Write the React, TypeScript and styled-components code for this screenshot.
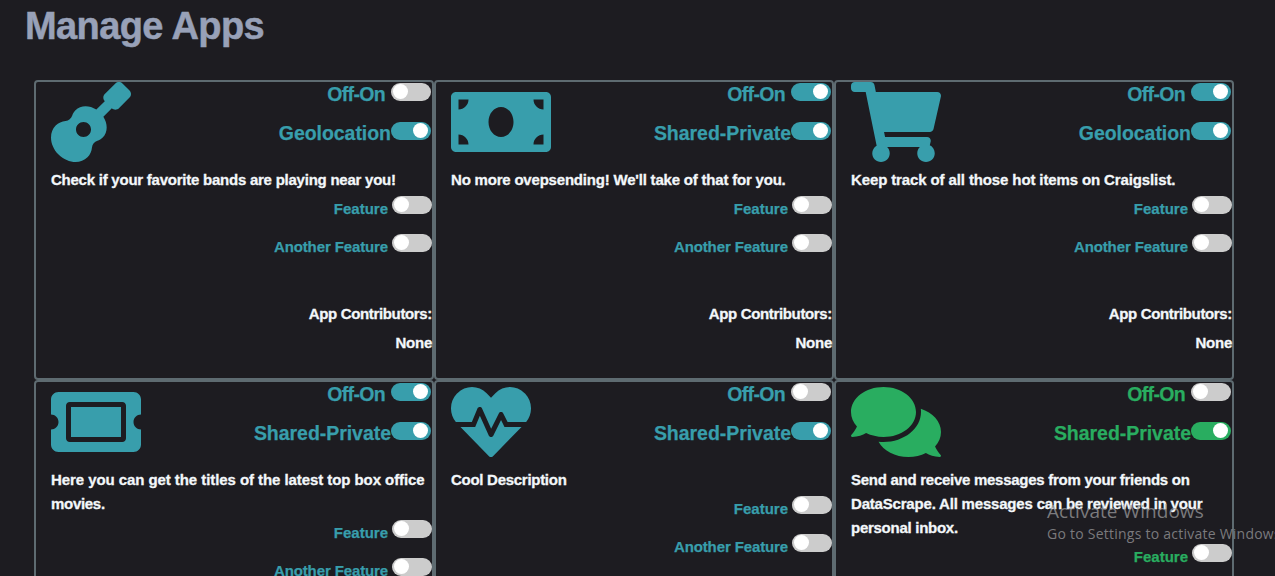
import React from 'react';
import styled, { createGlobalStyle } from 'styled-components';
import { FaMoneyBill, FaShoppingCart, FaTicketAlt, FaHeartbeat, FaComments } from 'react-icons/fa';

const TEAL = '#389eac';
const GREEN = '#29ad60';

const GlobalStyle = createGlobalStyle`
  *, *::before, *::after { box-sizing: border-box; }
  body {
    margin: 0;
    background: #1d1c21;
    font-family: 'Franklin Gothic Medium', 'Liberation Sans', Arial, sans-serif;
    font-weight: 700;
  }
`;

const Page = styled.main`
  position: relative;
  width: 100%;
  height: 576px;
  overflow: hidden;
`;

const Title = styled.h1`
  margin: 0;
  padding: 2px 0 0 25px;
  height: 80px;
  font-size: 38px;
  line-height: 48px;
  letter-spacing: -0.6px;
  color: #98a1b8;
  -webkit-text-stroke: 0.5px currentColor;
`;

const Grid = styled.div`
  display: grid;
  grid-template-columns: repeat(3, 400px);
  grid-auto-rows: 300px;
  padding-left: 34px;
`;

const Card = styled.section<{ $accent: string }>`
  --accent: ${(p) => p.$accent};
  border: 2px solid #5e6b71;
  border-radius: 4px;
  color: #f3f7fa;
`;

const Header = styled.header`
  display: flex;
  justify-content: space-between;
  height: 86px;
  padding: 0 1px 0 15px;
`;

const IconBox = styled.div<{ $width: number }>`
  width: ${(p) => p.$width}px;
  height: 80px;
  color: var(--accent);
  svg {
    display: block;
    width: 100%;
    height: 100%;
  }
`;

const Settings = styled.div`
  display: flex;
  flex-direction: column;
`;

const SettingRow = styled.div<{ $gap: number }>`
  display: flex;
  justify-content: flex-end;
  align-items: flex-start;
  gap: ${(p) => p.$gap}px;
  height: 39px;
  padding-top: 1px;
  font-size: 19.5px;
  line-height: 23px;
  color: var(--accent);
`;

const Label = styled.span<{ $track?: number }>`
  letter-spacing: ${(p) => p.$track ?? 0}px;
  white-space: nowrap;
  -webkit-text-stroke: 0.25px currentColor;
`;

const Track = styled.button<{ $on?: boolean }>`
  flex: none;
  width: 40px;
  height: 18px;
  padding: 1px 3px 2px 2px;
  border: 0;
  border-radius: 9px;
  background: ${(p) => (p.$on ? 'var(--accent)' : '#ccc')};
  display: flex;
  justify-content: ${(p) => (p.$on ? 'flex-end' : 'flex-start')};
`;

const Knob = styled.span`
  width: 15px;
  height: 15px;
  border-radius: 50%;
  background: #fff;
`;

const Description = styled.p`
  margin: 0;
  padding: 0 4px 0 15px;
  font-size: 15px;
  line-height: 24px;
  white-space: nowrap;
`;

const Line = styled.span<{ $track: number }>`
  display: block;
  letter-spacing: ${(p) => p.$track}px;
  -webkit-text-stroke: 0.3px currentColor;
`;

const FeatureRow = styled.div`
  display: flex;
  justify-content: flex-end;
  gap: 4px;
  height: 38px;
  padding-top: 4px;
  font-size: 15px;
  line-height: 25px;
  color: var(--accent);
`;

const Contributors = styled.div`
  margin-top: 31px;
  text-align: right;
  font-size: 15px;
  line-height: 29px;
`;

const Watermark = styled.aside`
  position: absolute;
  left: 1047px;
  top: 499px;
  font-family: 'Open Sans', 'Noto Sans', sans-serif;
  font-weight: 400;
  color: rgba(160, 160, 162, 0.72);
  white-space: nowrap;
  pointer-events: none;
`;

const WatermarkTitle = styled.div`
  font-size: 19px;
  line-height: 24px;
  letter-spacing: 0.05px;
`;

const WatermarkText = styled.div`
  font-size: 14px;
  line-height: 22px;
  letter-spacing: 0.24px;
`;

function Guitar() {
  return (
    <svg viewBox="0 0 512 512" fill="currentColor" aria-hidden="true">
      <path d="M502.6 54.6L457.4 9.4c-12.5-12.5-32.8-12.5-45.3 0l-67.9 67.9c-12.5 12.5-12.5 32.8 0 45.3L290 176.7c-45.4-29-100.4-28.9-133.5 4.2-9.7 9.7-16.4 21.2-20.5 33.9-6.1 18.8-23.5 33.1-42.7 34.9-24 2.3-46.3 11.6-63.4 28.8C-16.3 324.6-8 407.6 48.2 463.8c56.2 56.2 139.2 64.4 185.3 18.3 17.2-17.1 26.5-39.4 28.7-63.5 1.8-19.1 16.1-36.6 34.9-42.7 12.7-4.1 24.2-10.8 33.9-20.5 33.1-33.1 33.1-88.1 4.2-133.5l54.2-54.2c12.5 12.5 32.8 12.5 45.3 0l67.9-67.9c12.4-12.4 12.4-32.7 0-45.2zM208 352c-26.5 0-48-21.5-48-48s21.5-48 48-48 48 21.5 48 48-21.5 48-48 48z" />
    </svg>
  );
}

function Toggle({ on }: { on?: boolean }) {
  return (
    <Track type="button" role="switch" aria-checked={!!on} $on={on}>
      <Knob />
    </Track>
  );
}

interface AppInfo {
  icon: React.ComponentType;
  iconWidth: number;
  accent: string;
  enabled: boolean;
  mode: 'Geolocation' | 'Shared-Private';
  lines: [string, number][];
}

const apps: AppInfo[] = [
  { icon: Guitar, iconWidth: 80, accent: TEAL, enabled: false, mode: 'Geolocation', lines: [['Check if your favorite bands are playing near you!', -0.24]] },
  { icon: FaMoneyBill, iconWidth: 100, accent: TEAL, enabled: true, mode: 'Shared-Private', lines: [["No more ovepsending! We'll take of that for you.", -0.2]] },
  { icon: FaShoppingCart, iconWidth: 90, accent: TEAL, enabled: true, mode: 'Geolocation', lines: [['Keep track of all those hot items on Craigslist.', -0.12]] },
  {
    icon: FaTicketAlt, iconWidth: 90, accent: TEAL, enabled: true, mode: 'Shared-Private',
    lines: [['Here you can get the titles of the latest top box office', -0.07], ['movies.', -0.3]],
  },
  { icon: FaHeartbeat, iconWidth: 80, accent: TEAL, enabled: false, mode: 'Shared-Private', lines: [['Cool Description', -0.28]] },
  {
    icon: FaComments, iconWidth: 90, accent: GREEN, enabled: false, mode: 'Shared-Private',
    lines: [['Send and receive messages from your friends on', -0.27], ['DataScrape. All messages can be reviewed in your', -0.19], ['personal inbox.', -0.27]],
  },
];

function AppCard({ app }: { app: AppInfo }) {
  const Icon = app.icon;
  return (
    <Card $accent={app.accent}>
      <Header>
        <IconBox $width={app.iconWidth}><Icon /></IconBox>
        <Settings>
          <SettingRow $gap={6}>
            <Label $track={-0.65}>Off-On</Label>
            <Toggle on={app.enabled} />
          </SettingRow>
          <SettingRow $gap={0}>
            <Label $track={-0.04}>{app.mode}</Label>
            <Toggle on />
          </SettingRow>
        </Settings>
      </Header>
      <Description>
        {app.lines.map(([text, track]) => <Line key={text} $track={track}>{text}</Line>)}
      </Description>
      <FeatureRow><Label>Feature</Label><Toggle /></FeatureRow>
      <FeatureRow><Label $track={-0.12}>Another Feature</Label><Toggle /></FeatureRow>
      <Contributors>
        <Line $track={-0.35}>App Contributors:</Line>
        <Line $track={-0.25}>None</Line>
      </Contributors>
    </Card>
  );
}

export default function App() {
  return (
    <Page>
      <GlobalStyle />
      <Title>Manage Apps</Title>
      <Grid>
        {apps.map((app) => <AppCard key={app.lines[0][0]} app={app} />)}
      </Grid>
      <Watermark>
        <WatermarkTitle>Activate Windows</WatermarkTitle>
        <WatermarkText>Go to Settings to activate Windows.</WatermarkText>
      </Watermark>
    </Page>
  );
}
